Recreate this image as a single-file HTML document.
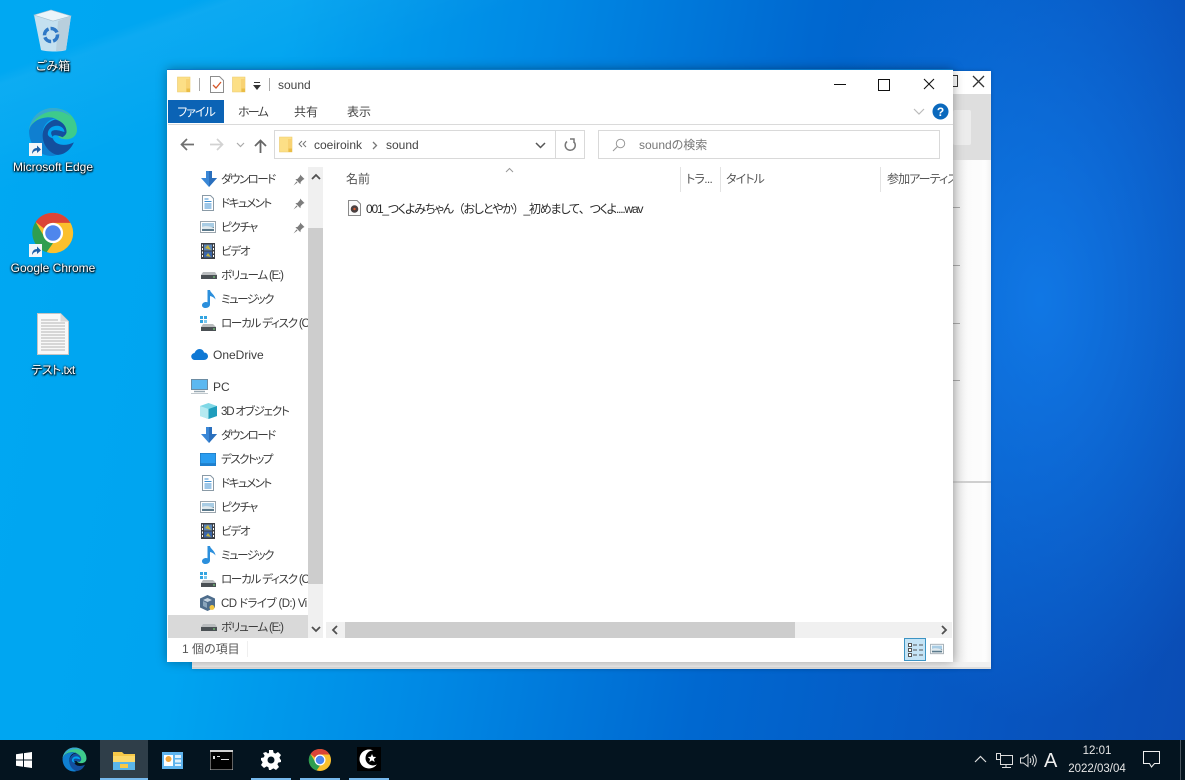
<!DOCTYPE html>
<html lang="ja"><head><meta charset="utf-8"><title>sound</title>
<style>
html,body{margin:0;padding:0;width:1185px;height:780px;overflow:hidden}
body{position:relative;font-family:"Liberation Sans","Noto Sans CJK JP",sans-serif;font-size:12px;color:#222;font-feature-settings:"palt" 1;
background:
 linear-gradient(160deg,rgba(255,255,255,0) 0,rgba(255,255,255,0) 6%,rgba(255,255,255,.05) 7%,rgba(255,255,255,0) 16%),
 radial-gradient(ellipse 240px 420px at 1040px 300px,rgba(20,130,240,.75),rgba(20,130,240,0) 100%),
 linear-gradient(100deg,#00a8f2 0%,#00a4f0 22%,#0088e4 42%,#0068d0 62%,#0755c0 85%,#0a4cb4 100%);}
.a{position:absolute;white-space:nowrap}
.bgw{position:absolute;left:192px;top:71px;width:799px;height:598px;background:#fff;box-shadow:0 0 4px rgba(0,0,0,.2)}
.win{position:absolute;left:167px;top:69px;width:786px;height:593px;background:#fff;box-shadow:0 0 10px rgba(0,0,0,.35);border-top:1px solid #0a78c8;box-sizing:border-box;overflow:hidden}
.desk{position:absolute;left:0;width:106px;text-align:center;color:#fff;font-size:12px;text-shadow:0 1px 2px #000,0 0 2px #000,1px 1px 1px rgba(0,0,0,.7)}
.n{position:absolute;left:54px;white-space:nowrap;font-size:11.5px;color:#3c3c3c;line-height:16px;width:87px;overflow:hidden;letter-spacing:-1.500px;margin-top:2px}
.m{letter-spacing:-1.200px}
.ic{position:absolute}
.tab{position:absolute;top:34px;font-size:12px;color:#444;line-height:16px}
.hd{position:absolute;top:101px;color:#555;font-size:12px;line-height:16px;white-space:nowrap;letter-spacing:-.9px}
.sep{position:absolute;background:#e3e3e3;width:1px}
.ul{position:absolute;top:778px;height:2px;background:#76b9ed}
.fw{font-feature-settings:normal}
</style></head><body>
<svg width="0" height="0" style="position:absolute"><defs>
<symbol id="fold" viewBox="0 0 14 17"><path d="M.5 1H13v15H.5z" fill="#fcdf86" stroke="#ecca6c" stroke-width=".6"/><path d="M9 3h4v13H9z" fill="#f8d272"/><path d="M9.500 12.500H13V16H9.500z" fill="#eabd46"/></symbol>
<symbol id="dl" viewBox="0 0 16 16"><path d="M5 0h6v7h5l-8 9-8-9h5z" fill="#3a87d6"/><path d="M8 0h3v7h5l-8 9z" fill="#2a6fbd"/></symbol>
<symbol id="doc" viewBox="0 0 16 16"><path d="M2.500.5h8l3 3v12h-11z" fill="#fff" stroke="#8a9aa6"/><path d="M4.500 4h4M4.500 6.500h7M4.500 9h7M4.500 11h7M4.500 13h7" stroke="#3d8fd1"/></symbol>
<symbol id="pic" viewBox="0 0 16 14"><rect x=".5" y="1.500" width="15" height="11" fill="#fff" stroke="#9aa5ad"/><rect x="2" y="3" width="12" height="4" fill="#a8cce4"/><rect x="2" y="7" width="12" height="4" fill="#5b7a8c"/><path d="M2 7c3-1.500 8-1 12 1v1H2z" fill="#dfe9ee"/></symbol>
<symbol id="vid" viewBox="0 0 14 16"><rect width="14" height="16" fill="#3b3f45"/><rect x="3" y="1.500" width="8" height="6" fill="#5d87b8"/><rect x="3" y="8.500" width="8" height="6" fill="#3b66a8"/><path d="M4 5l3-3 3 5zM5 13l2-3 3 4z" fill="#c4b33e"/><path d="M1 1.500h1v2H1zM1 5h1v2H1zM1 8.500h1v2H1zM1 12h1v2H1zM12 1.500h1v2h-1zM12 5h1v2h-1zM12 8.500h1v2h-1zM12 12h1v2h-1z" fill="#fff"/></symbol>
<symbol id="vol" viewBox="0 0 16 8"><path d="M2 1h12l2 3v4H0V4z" fill="#b9bcbe"/><rect y="4" width="16" height="4" fill="#4a5054"/><rect x="12" y="5.500" width="2" height="1" fill="#7fe07f"/></symbol>
<symbol id="mus" viewBox="0 0 14 18"><path d="M5.500 0h2.500c.4 3 5 4.500 5.500 9.500-1.300-1.800-3.200-3-5.500-3.500v8.500c0 2-2 3.500-4.300 3.500C1.500 18 0 16.800 0 15.200 0 13.300 2 12 4 12c.6 0 1.100.1 1.500.3z" fill="#2b8fdc"/></symbol>
<symbol id="loc" viewBox="0 0 16 15"><rect x="0" y="0" width="3" height="3" fill="#34a4e0"/><rect x="4" y="0" width="3" height="3" fill="#34a4e0"/><rect x="0" y="4" width="3" height="3" fill="#34a4e0"/><rect x="4" y="4" width="3" height="3" fill="#7cc8ee"/><path d="M3 8h10l3 3v4H1v-4z" fill="#b9bcbe"/><rect x="1" y="11" width="15" height="4" fill="#4a5054"/><rect x="13" y="12.500" width="2" height="1" fill="#7fe07f"/></symbol>
<symbol id="pin" viewBox="0 0 12 12"><path d="M7 .5l4.500 4.500-1.500.7-2.300 2.300-.3 2.200-5-5 2.200-.3L7 2z" fill="#7d7d7d"/><path d="M3.500 7.500L.5 11.500l4-3z" fill="#7d7d7d"/></symbol>
<symbol id="short" viewBox="0 0 13 13"><rect width="13" height="13" fill="#f3f6f9"/><path d="M3 11c0-4 2-6 5-6V2.500L12 6.500 8 10V7.500C6 7.500 4.500 8.500 3 11z" fill="#1d5fa8"/></symbol>
<symbol id="chrome" viewBox="0 0 48 48"><circle cx="24" cy="24" r="22" fill="#fbc02d"/><path d="M24 2a22 22 0 0 1 19 11H24a11 11 0 0 0-10 6L5 12A22 22 0 0 1 24 2z" fill="#db4437"/><path d="M5 12l10 17a11 11 0 0 0 9 6l-7 10A22 22 0 0 1 5 12z" fill="#2f9e4f"/><circle cx="24" cy="24" r="11" fill="#fff"/><circle cx="24" cy="24" r="8.500" fill="#4e86ed"/></symbol>
<symbol id="edge" viewBox="0 0 48 48"><path d="M24 1c13 0 23 9 23 21 0 6-5 9-10 9-4 0-7-1-8-3 3-1 5-4 4-8-1-7-7-10-13-10C10 10 2 16 1 23 2 10 12 1 24 1z" fill="#3ecb8c"/><path d="M1 23C2 10 12 1 24 1c7 0 13 3 17 8-4-3-9-5-15-5C14 4 3 13 1 23z" fill="#37a9cf"/><path d="M1 23c1-7 9-13 19-13 2 0 4 .4 6 1-7 1-12 7-12 15 0 8 5 16 14 20-2 .6-3 1-5 1C10 47 1 36 1 23z" fill="#0f7fd0"/><path d="M14 27c0-7 5-13 12-15 5 1 11 5 11 12 0 2-2 4-4 5-2-1-8-3-9-1-1 3 2 7 7 8 4 1 9 0 13-2-3 7-9 12-16 12-8-2-14-10-14-19z" fill="#134f9e"/><path d="M19 26c0-5 4-8 9-8 4 0 7 3 7 6-3-1-9-3-12-1-2 2 0 6 4 8-5-1-8-3-8-5z" fill="#00a4f0"/></symbol>
</defs></svg>

<!-- desktop icons -->
<svg class="ic" style="left:33px;top:9px" width="40" height="44" viewBox="0 0 40 44"><path d="M1 6L18 1l20 6-5 34c-3 2-20 2-25 0z" fill="#cfe3ef" opacity=".95"/><path d="M1 6L18 1l20 6-18 5z" fill="#eaf4fa" stroke="#9fbccd" stroke-width=".6"/><path d="M25 12l-2 30c4 0 8-.5 10-1l5-34z" fill="#b8cfdd"/><circle cx="18" cy="26" r="6.500" fill="none" stroke="#2f78c6" stroke-width="3.500" stroke-dasharray="8 2"/></svg>
<div class="desk" style="top:57px">ごみ箱</div>
<svg class="ic" style="left:28px;top:107px" width="50" height="50"><use href="#edge" width="50" height="50"/></svg>
<svg class="ic" style="left:29px;top:143px" width="13" height="13"><use href="#short"/></svg>
<div class="desk" style="top:160px">Microsoft Edge</div>
<svg class="ic" style="left:31px;top:211px" width="44" height="44"><use href="#chrome" width="44" height="44" x="0" y="0"/></svg>
<svg class="ic" style="left:29px;top:244px" width="13" height="13"><use href="#short"/></svg>
<div class="desk" style="top:261px">Google Chrome</div>
<svg class="ic" style="left:37px;top:313px" width="32" height="42" viewBox="0 0 32 42"><path d="M.5.500h23l8 8v33H.5z" fill="#f8f8f8" stroke="#c4c4c4"/><path d="M23.500.5v8h8z" fill="#d8d8d8"/><path d="M4 7h17M4 10h24M4 13h24M4 16h24M4 19h24M4 22h24M4 25h24M4 28h24M4 31h24M4 34h24M4 37h24" stroke="#b5b5b5"/></svg>
<div class="desk" style="top:361px;letter-spacing:-.5px">テスト.txt</div>

<!-- background window -->
<div class="bgw">
 <div class="a" style="left:0;top:23px;width:799px;height:66px;background:#dedede"></div>
 <div class="a" style="left:761px;top:39px;width:18px;height:35px;background:#ececec;border-radius:2px"></div>
 <div class="a" style="left:761px;top:89px;width:38px;height:509px;background:linear-gradient(90deg,#e6e6e6,#fbfbfb 40%,#fdfdfd 85%,#f2f2f2)"></div>
 <div class="a" style="left:761px;top:136px;width:7px;height:1px;background:#a8a8a8"></div>
 <div class="a" style="left:761px;top:194px;width:7px;height:1px;background:#a8a8a8"></div>
 <div class="a" style="left:761px;top:252px;width:7px;height:1px;background:#a8a8a8"></div>
 <div class="a" style="left:761px;top:309px;width:7px;height:1px;background:#a8a8a8"></div>
 <div class="a" style="left:761px;top:410px;width:38px;height:2px;background:#cfcfcf"></div>
 <div class="a" style="left:761px;top:4px;height:12px;width:5px;border:1.500px solid #333;box-sizing:border-box;border-left:0"></div>
 <svg class="a" style="left:780px;top:4px" width="13" height="13"><path d="M1 1l11 11M12 1L1 12" stroke="#333" stroke-width="1.300"/></svg>
 <div class="a" style="left:0;bottom:0;width:799px;height:7px;background:#f0f0f0;border-bottom:2px solid #ddd;box-sizing:border-box"></div>
</div>

<!-- explorer window; inner coords = page - (167,70) -->
<div class="win">
 <svg class="ic" style="left:10px;top:6px" width="14" height="17"><use href="#fold"/></svg>
 <div class="sep" style="left:32px;top:8px;height:13px;background:#a8a8a8"></div>
 <svg class="ic" style="left:43px;top:6px" width="14" height="17" viewBox="0 0 14 17"><path d="M.5.500h9l4 4v12H.5z" fill="#fff" stroke="#8d8d8d"/><path d="M3 9l3 3 5-6" fill="none" stroke="#d4572a" stroke-width="1.300"/></svg>
 <svg class="ic" style="left:65px;top:6px" width="14" height="17"><use href="#fold"/></svg>
 <svg class="ic" style="left:86px;top:12px" width="9" height="9"><path d="M1 0h6v1H1z" fill="#333"/><path d="M0 3h8L4 8z" fill="#333"/></svg>
 <div class="sep" style="left:102px;top:8px;height:13px;background:#a8a8a8"></div>
 <div class="a" style="left:111px;top:7px;color:#444;line-height:16px">sound</div>
 <div class="a" style="left:667px;top:14px;width:12px;height:1px;background:#111"></div>
 <div class="a" style="left:711px;top:9px;width:10px;height:10px;border:1px solid #111"></div>
 <svg class="ic" style="left:756px;top:8px" width="12" height="12"><path d="M1 1l10 10M11 1L1 11" stroke="#111" stroke-width="1.100"/></svg>

 <div class="a" style="left:1px;top:30px;width:56px;height:23px;background:#0b63b5;color:#fff;text-align:center;line-height:25px;letter-spacing:-1px">ファイル</div>
 <div class="tab" style="left:71px;letter-spacing:-1.800px">ホーム</div>
 <div class="tab" style="left:127px">共有</div>
 <div class="tab" style="left:180px">表示</div>
 <svg class="ic" style="left:746px;top:38px" width="12" height="8"><path d="M1 1l5 5 5-5" fill="none" stroke="#bbb" stroke-width="1.200"/></svg>
 <svg class="ic" style="left:765px;top:33px" width="17" height="17"><circle cx="8.500" cy="8.500" r="8" fill="#0b69bd"/><text x="8.500" y="13" text-anchor="middle" font-size="12" font-weight="700" fill="#fff" font-family="Liberation Sans">?</text></svg>
 <div class="a" style="left:1px;top:54px;width:785px;height:1px;background:#dadada"></div>

 <svg class="ic" style="left:13px;top:68px" width="15" height="13"><path d="M14 6.500H2M7 1L1.500 6.500 7 12" fill="none" stroke="#707070" stroke-width="1.700"/></svg>
 <svg class="ic" style="left:42px;top:68px" width="15" height="13"><path d="M1 6.500h12M8 1l5.500 5.500L8 12" fill="none" stroke="#d2d2d2" stroke-width="1.700"/></svg>
 <svg class="ic" style="left:69px;top:72px" width="9" height="6"><path d="M1 1l3.500 3.500L8 1" fill="none" stroke="#aaa" stroke-width="1.200"/></svg>
 <svg class="ic" style="left:87px;top:69px" width="13" height="14"><path d="M6.500 14V2M1 7l5.500-5.500L12 7" fill="none" stroke="#666" stroke-width="1.800"/></svg>
 <div class="a" style="left:107px;top:60px;width:282px;height:29px;border:1px solid #d9d9d9;box-sizing:border-box"></div>
 <svg class="ic" style="left:112px;top:66px" width="14" height="17"><use href="#fold"/></svg>
 <svg class="ic" style="left:131px;top:70px" width="9" height="8"><path d="M4 1L1 4l3 3M8 1L5 4l3 3" fill="none" stroke="#777"/></svg>
 <div class="a" style="left:147px;top:67px;color:#444;line-height:16px">coeiroink</div>
 <svg class="ic" style="left:205px;top:71px" width="6" height="9"><path d="M1 1l3.500 3.500L1 8" fill="none" stroke="#777" stroke-width="1.300"/></svg>
 <div class="a" style="left:219px;top:67px;color:#444;line-height:16px">sound</div>
 <svg class="ic" style="left:368px;top:72px" width="11" height="7"><path d="M1 1l4.500 4.500L10 1" fill="none" stroke="#555" stroke-width="1.500"/></svg>
 <div class="a" style="left:388px;top:60px;width:30px;height:29px;border:1px solid #d9d9d9;box-sizing:border-box"></div>
 <svg class="ic" style="left:397px;top:68px" width="13" height="14"><path d="M3 3.500a5 5 0 1 0 7 .5M6 1h4v4" fill="none" stroke="#777" stroke-width="1.500"/></svg>
 <div class="a" style="left:431px;top:60px;width:342px;height:29px;border:1px solid #d9d9d9;box-sizing:border-box"></div>
 <svg class="ic" style="left:445px;top:68px" width="14" height="14"><circle cx="8.500" cy="5.500" r="4.200" fill="none" stroke="#999"/><path d="M5.500 8.500L1 13" stroke="#999" stroke-width="1.100"/></svg>
 <div class="a" style="left:472px;top:67px;color:#777;line-height:16px">soundの検索</div>

 <!-- nav -->
 <svg class="ic" style="left:34px;top:101px" width="16" height="16"><use href="#dl"/></svg><div class="n" style="top:100px">ダウンロード</div>
 <svg class="ic" style="left:33px;top:125px" width="16" height="16"><use href="#doc"/></svg><div class="n" style="top:124px">ドキュメント</div>
 <svg class="ic" style="left:33px;top:150px" width="16" height="14"><use href="#pic"/></svg><div class="n m" style="top:148px">ピクチャ</div>
 <svg class="ic" style="left:34px;top:173px" width="14" height="16"><use href="#vid"/></svg><div class="n m" style="top:172px">ビデオ</div>
 <svg class="ic" style="left:34px;top:201px" width="16" height="8"><use href="#vol"/></svg><div class="n m" style="top:196px">ボリューム (E:)</div>
 <svg class="ic" style="left:35px;top:220px" width="14" height="18"><use href="#mus"/></svg><div class="n" style="top:220px">ミュージック</div>
 <svg class="ic" style="left:33px;top:246px" width="16" height="15"><use href="#loc"/></svg><div class="n m" style="top:244px">ローカル ディスク (C</div>
 <svg class="ic" style="left:24px;top:279px" width="17" height="11" viewBox="0 0 17 11"><path d="M4 11a3.500 3.500 0 0 1-.5-7C4.500 1.500 6.500 0 8.500 0c2.500 0 4 1.500 4.500 3.500 2.200 0 4 1.500 4 3.800S15 11 13 11z" fill="#0f78d4"/></svg><div class="n" style="top:276px;left:46px;width:90px;letter-spacing:0;font-size:12px;margin-top:1px">OneDrive</div>
 <svg class="ic" style="left:24px;top:309px" width="17" height="15" viewBox="0 0 17 15"><rect x=".5" y=".5" width="16" height="10" fill="#5cb8f0" stroke="#6c8ca3"/><path d="M3 12.500h11" stroke="#9aaab4" stroke-width="1.500"/><path d="M0 14.500h17" stroke="#c0c8cd"/></svg><div class="n" style="top:308px;left:46px;letter-spacing:0;font-size:12px;margin-top:1px">PC</div>
 <svg class="ic" style="left:33px;top:333px" width="17" height="16" viewBox="0 0 17 16"><path d="M8.500 0L17 3v10l-8.500 3L0 13V3z" fill="#7fd8e6"/><path d="M8.500 6L17 3v10l-8.500 3z" fill="#1f9dbc"/><path d="M0 3l8.500 3v10L0 13z" fill="#b5eaf1"/></svg><div class="n m" style="top:332px">3D オブジェクト</div>
 <svg class="ic" style="left:34px;top:357px" width="16" height="16"><use href="#dl"/></svg><div class="n" style="top:356px">ダウンロード</div>
 <svg class="ic" style="left:33px;top:383px" width="16" height="13" viewBox="0 0 16 13"><rect width="16" height="11" fill="#2a9df0" stroke="#1a6db0"/><rect y="11" width="16" height="2" fill="#1e7fce"/></svg><div class="n" style="top:380px">デスクトップ</div>
 <svg class="ic" style="left:33px;top:405px" width="16" height="16"><use href="#doc"/></svg><div class="n" style="top:404px">ドキュメント</div>
 <svg class="ic" style="left:33px;top:430px" width="16" height="14"><use href="#pic"/></svg><div class="n m" style="top:428px">ピクチャ</div>
 <svg class="ic" style="left:34px;top:453px" width="14" height="16"><use href="#vid"/></svg><div class="n m" style="top:452px">ビデオ</div>
 <svg class="ic" style="left:35px;top:476px" width="14" height="18"><use href="#mus"/></svg><div class="n" style="top:476px">ミュージック</div>
 <svg class="ic" style="left:33px;top:502px" width="16" height="15"><use href="#loc"/></svg><div class="n m" style="top:500px">ローカル ディスク (C</div>
 <svg class="ic" style="left:33px;top:525px" width="15" height="16" viewBox="0 0 15 16"><path d="M7.500 0L15 3.500v9L7.500 16 0 12.500v-9z" fill="#4e6d8c"/><path d="M3 5l4.500 2L12 5 7.500 3z" fill="#c8d6e2"/><path d="M3 6l4 2v5l-4-2z" fill="#8aa5bc"/><circle cx="12" cy="12.500" r="2.500" fill="#f2c744"/></svg><div class="n" style="top:524px;letter-spacing:-.6px">CD ドライブ (D:) Vi</div>
 <div class="a" style="left:1px;top:545px;width:140px;height:23px;background:#d9d9d9"></div>
 <svg class="ic" style="left:34px;top:553px" width="16" height="8"><use href="#vol"/></svg><div class="n m" style="top:548px">ボリューム (E:)</div>

 <svg class="ic" style="left:126px;top:104px" width="12" height="12"><use href="#pin"/></svg>
 <svg class="ic" style="left:126px;top:128px" width="12" height="12"><use href="#pin"/></svg>
 <svg class="ic" style="left:126px;top:152px" width="12" height="12"><use href="#pin"/></svg>

 <!-- nav scrollbar -->
 <div class="a" style="left:141px;top:97px;width:15px;height:471px;background:#f0f0f0"></div>
 <div class="a" style="left:141px;top:158px;width:15px;height:356px;background:#cdcdcd"></div>
 <svg class="ic" style="left:144px;top:103px" width="10" height="7"><path d="M1 6l4-4 4 4" fill="none" stroke="#505050" stroke-width="1.800"/></svg>
 <svg class="ic" style="left:144px;top:556px" width="10" height="7"><path d="M1 1l4 4 4-4" fill="none" stroke="#505050" stroke-width="1.800"/></svg>

 <!-- header -->
 <svg class="ic" style="left:338px;top:97px" width="9" height="6"><path d="M1 5l3.500-3.500L8 5" fill="none" stroke="#999"/></svg>
 <div class="hd" style="left:179px;letter-spacing:0">名前</div>
 <div class="sep" style="left:513px;top:97px;height:25px"></div>
 <div class="hd" style="left:519px;letter-spacing:-.7px">トラ...</div>
 <div class="sep" style="left:553px;top:97px;height:25px"></div>
 <div class="hd" style="left:559px">タイトル</div>
 <div class="sep" style="left:713px;top:97px;height:25px"></div>
 <div class="hd" style="left:720px;width:66px;overflow:hidden">参加アーティスト</div>

 <svg class="ic" style="left:181px;top:130px" width="13" height="16" viewBox="0 0 13 16"><path d="M.5.500h8.500l3.500 3.500v11.500H.5z" fill="#fafafa" stroke="#8a8a8a"/><circle cx="6.500" cy="9" r="3.800" fill="#4a4040"/><circle cx="6.500" cy="9" r="1.200" fill="#d85a30"/></svg>
 <div class="a" style="left:199px;top:131px;color:#2a2a2a;line-height:16px;letter-spacing:-1.200px">001_つくよみちゃん<span class="fw">（</span>おしとやか<span class="fw">）</span>_初めまして<span class="fw">、</span>つくよ....wav</div>

 <!-- h scrollbar -->
 <div class="a" style="left:159px;top:552px;width:626px;height:16px;background:#f0f0f0"></div>
 <div class="a" style="left:178px;top:552px;width:450px;height:16px;background:#cdcdcd"></div>
 <svg class="ic" style="left:164px;top:555px" width="8" height="10"><path d="M6 1L2 5l4 4" fill="none" stroke="#505050" stroke-width="1.800"/></svg>
 <svg class="ic" style="left:773px;top:555px" width="8" height="10"><path d="M2 1l4 4-4 4" fill="none" stroke="#505050" stroke-width="1.800"/></svg>

 <!-- status -->
 <div class="a" style="left:15px;top:571px;color:#555;line-height:16px">1 個の項目</div>
 <div class="sep" style="left:80px;top:571px;height:16px;background:#efefef"></div>
 <div class="a" style="left:737px;top:568px;width:22px;height:23px;background:#c5e4f6;border:1px solid #3c94c4;box-sizing:border-box"></div>
 <svg class="ic" style="left:741px;top:573px" width="15" height="14"><path d="M.5.500h3v3h-3zM.5 5.500h3v3h-3zM.5 10.500h3v3h-3z" fill="#fff" stroke="#555"/><path d="M5 2h4M11 2h4M5 7h4M11 7h4M5 12h4M11 12h4" stroke="#555"/></svg>
 <svg class="ic" style="left:763px;top:573px" width="14" height="12"><use href="#pic" width="14" height="12"/></svg>
</div>

<!-- taskbar -->
<div class="a" style="left:0;top:740px;width:1185px;height:40px;background:#04141f"></div>
<div class="a" style="left:100px;top:740px;width:48px;height:40px;background:#2f3e49"></div>
<div class="ul" style="left:100px;width:48px"></div>
<div class="ul" style="left:251px;width:40px"></div>
<div class="ul" style="left:300px;width:40px"></div>
<div class="ul" style="left:349px;width:40px"></div>
<svg class="ic" style="left:16px;top:752px" width="16" height="16"><path d="M0 2.300L7 1.300V7.500H0zM8 1.100L16 0v7.500H8zM0 8.500h7v6.200L0 13.700zM8 8.500h8V16L8 14.900z" fill="#fff"/></svg>
<svg class="ic" style="left:62px;top:747px" width="25" height="25"><use href="#edge" width="25" height="25"/></svg>
<svg class="ic" style="left:113px;top:751px" width="22" height="19" viewBox="0 0 22 19"><path d="M0 1h9l2 2h11v16H0z" fill="#f7c948"/><path d="M0 5h22v14H0z" fill="#fcd96a"/><path d="M0 11h22v8H0z" fill="#5bb5e8"/><path d="M7 13h8v4H7z" fill="#f7c948"/></svg>
<svg class="ic" style="left:162px;top:752px" width="21" height="17" viewBox="0 0 21 17"><rect width="21" height="17" fill="#5fb4ee"/><rect x="2" y="3" width="9" height="11" fill="#fff"/><circle cx="6.500" cy="7" r="3" fill="#f2a53a"/><path d="M13 3h6v3h-6zM13 7.500h6v3h-6zM13 12h6v2h-6z" fill="#dff1fc"/></svg>
<svg class="ic" style="left:210px;top:750px" width="23" height="20" viewBox="0 0 23 20"><rect width="23" height="20" fill="#000" stroke="#c6c6c6"/><rect width="23" height="2" fill="#cfcfcf"/><path d="M3 6h2v3H3zM7 6h3v1H7zM11 9h8v1h-8z" fill="#ddd"/></svg>
<svg class="ic" style="left:261px;top:750px" width="20" height="20" viewBox="0 0 20 20"><path d="M8 0h4l.6 2.800 1.800.8L17 2l3 3-1.600 2.500.8 1.800L20 10v0l0 2-2.800.6-.8 1.800L18 17l-3 3-2.500-1.600-1.800.8L10 20H8l-.6-2.800-1.800-.8L3 18l-3-3 1.600-2.500-.8-1.800L-1 10l1-2 2.800-.6.8-1.800L2 3l3-1 1.900 1.500L8 3z" fill="#fff"/><circle cx="10" cy="10" r="3.500" fill="#04141f"/></svg>
<svg class="ic" style="left:308px;top:748px" width="24" height="24"><use href="#chrome" width="24" height="24"/></svg>
<svg class="ic" style="left:357px;top:747px" width="24" height="24" viewBox="0 0 24 24"><rect width="24" height="24" fill="#000"/><circle cx="12" cy="12" r="9.500" fill="#fff"/><circle cx="16" cy="11" r="7.500" fill="#000"/><path d="M15 7l1.200 2.800 3 .2-2.300 2 .8 3-2.700-1.600-2.700 1.600.8-3-2.300-2 3-.2z" fill="#fff"/></svg>

<!-- tray -->
<svg class="ic" style="left:974px;top:755px" width="13" height="8"><path d="M1 7l5.500-5.500L12 7" fill="none" stroke="#ddd" stroke-width="1.200"/></svg>
<svg class="ic" style="left:996px;top:753px" width="17" height="15" viewBox="0 0 17 15"><path d="M4.500 2.500h12v9h-12zM10 11.500v3M6 14.500h9" fill="none" stroke="#ddd"/><rect x=".5" y=".5" width="4" height="6" fill="#04141f" stroke="#ddd"/></svg>
<svg class="ic" style="left:1020px;top:753px" width="17" height="15" viewBox="0 0 17 15"><path d="M.5 5h3L8 1.500v12L3.500 10h-3zM10 5c1 1.500 1 3.500 0 5M12 3c2 2.500 2 6.500 0 9M14 1.500c3 3.500 3 8.500 0 12" fill="none" stroke="#ddd"/></svg>
<div class="a" style="left:1044px;top:749px;color:#eee;font-size:20px;line-height:24px">A</div>
<div class="a" style="left:1062px;top:743px;width:70px;text-align:center;color:#e6e6e6;font-size:11.500px;line-height:16px">12:01</div>
<div class="a" style="left:1062px;top:761px;width:70px;text-align:center;color:#e6e6e6;font-size:11.500px;line-height:16px">2022/03/04</div>
<svg class="ic" style="left:1143px;top:751px" width="18" height="18" viewBox="0 0 18 18"><path d="M.5.500h16v12h-5L8.500 16l-2-3.500h-6z" fill="none" stroke="#eee"/></svg>
<div class="a" style="left:1180px;top:740px;width:1px;height:40px;background:#4a5660"></div>
</body></html>
